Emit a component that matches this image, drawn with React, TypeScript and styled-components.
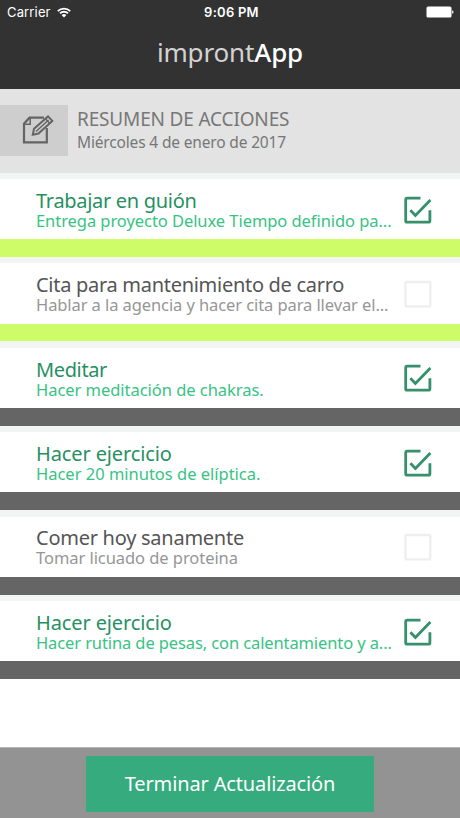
import React from "react";
import styled, { createGlobalStyle } from "styled-components";

const GlobalStyle = createGlobalStyle`
  * { box-sizing: border-box; }
  body { margin: 0; background: #fff; font-family: "Noto Sans", sans-serif; }
  h1, h2, h3, p, ul { margin: 0; padding: 0; font-weight: 400; }
`;

const Screen = styled.div`
  width: 460px;
  height: 818px;
  display: flex;
  flex-direction: column;
  overflow: hidden;
  background: #fff;
`;

const Header = styled.header`
  flex: none;
  height: 89px;
  background: #323232;
  color: #fff;
`;

const StatusBar = styled.div`
  display: grid;
  grid-template-columns: 1fr auto 1fr;
  align-items: center;
  height: 24px;
  padding: 0 6px 0 7px;
  font-family: Inter, sans-serif;
  font-size: 13px;
`;

const Carrier = styled.div`
  display: flex;
  align-items: center;
  gap: 6px;
  letter-spacing: 0.15px;
`;

const Clock = styled.div`
  padding-left: 2px;
  font-weight: 600;
  font-size: 13px;
  letter-spacing: 0.25px;
`;

const BatterySlot = styled.div`
  display: flex;
  justify-content: flex-end;
`;

const Brand = styled.h1`
  margin-top: 9px;
  text-align: center;
  font-size: 26px;
  line-height: 38px;
  letter-spacing: -0.15px;
  color: #d2d2d2;
`;

const BrandStrong = styled.span`
  color: #fff;
  font-weight: 500;
`;

const Summary = styled.section`
  flex: none;
  display: flex;
  height: 83.6px;
  padding-top: 16px;
  background: #e3e3e3;
`;

const SummaryIcon = styled.div`
  display: flex;
  width: 68px;
  height: 51px;
  padding: 10px 0 0 22px;
  background: #cecece;
`;

const SummaryText = styled.div`
  padding-left: 9px;
  color: #777;
  white-space: nowrap;
`;

const SummaryTitle = styled.h2`
  font-size: 19px;
  line-height: 28px;
  letter-spacing: -0.16px;
`;

const SummaryDate = styled.p`
  font-size: 15.5px;
  line-height: 19px;
  letter-spacing: -0.16px;
`;

const List = styled.ul`
  flex: 1;
  list-style: none;
`;

const Item = styled.li`
  height: 84.4px;
  padding-top: 6.4px;
  background: #f3f4f4;
`;

const ItemBody = styled.div`
  display: flex;
  justify-content: space-between;
  height: 60.2px;
  padding: 10.8px 28px 0 36px;
  background: #fff;
`;

const ItemBar = styled.div<{ $color: string }>`
  height: 17.8px;
  background: ${(p) => p.$color};
`;

const ItemTitle = styled.h3<{ $done: boolean; $spacing: number }>`
  font-size: 20px;
  line-height: 22px;
  letter-spacing: ${(p) => p.$spacing}px;
  white-space: nowrap;
  color: ${(p) => (p.$done ? "#279062" : "#555")};
`;

const ItemNote = styled.p<{ $done: boolean; $spacing: number }>`
  font-size: 16.5px;
  line-height: 18px;
  letter-spacing: ${(p) => p.$spacing}px;
  white-space: nowrap;
  color: ${(p) => (p.$done ? "#38c384" : "#969696")};
`;

const CheckSlot = styled.div`
  padding-top: 5.8px;
`;

const Footer = styled.footer`
  flex: none;
  display: flex;
  justify-content: center;
  height: 70.6px;
  padding-top: 8px;
  border-top: 1px solid #b5b5b5;
  background: #939393;
`;

const FinishButton = styled.button`
  width: 288px;
  height: 55.4px;
  padding: 0 0 1px;
  border: 0;
  background: #35ab7e;
  color: #fff;
  font-family: inherit;
  font-size: 20px;
  letter-spacing: -0.14px;
`;

const Wifi = () => (
  <svg width="14" height="11" viewBox="0 0 14 11" fill="none" stroke="#fff" strokeWidth="1.8">
    <path d="M0.8 4.1a8.8 8.8 0 0 1 12.4 0M3 6.4a5.7 5.7 0 0 1 8 0" />
    <path d="M7 10.5 4.7 8.2a3.2 3.2 0 0 1 4.6 0z" fill="#fff" stroke="none" />
  </svg>
);

const Battery = () => (
  <svg width="28" height="12" viewBox="0 0 28 12" fill="#fff">
    <rect x="0.5" y="0.5" width="25" height="11" rx="1.6" />
    <path d="M26.2 4.2q1.3.4 1.3 1.8t-1.3 1.8z" />
  </svg>
);

const NoteIcon = () => (
  <svg width="32" height="30" viewBox="0 0 32 30" fill="none" stroke="#646464" strokeWidth="2.2">
    <path d="M22 2.7H7.5L2 8.7v18.6h22.8V13" />
    <path d="M8.2 3v6.2H2" strokeWidth="1.5" />
    <path d="M10.8 19.7l1.2-6L26 1.4l4.3 4.5L16.5 18.6z" fill="#cecece" strokeWidth="2" />
    <path d="M14 16.6 26.6 5M23.4 3.8l4.5 4.7" strokeWidth="1.4" />
  </svg>
);

const Checkbox = ({ checked }: { checked: boolean }) =>
  checked ? (
    <svg width="29" height="28" viewBox="0 0 29 28" fill="none" stroke="#35906b" strokeWidth="2.8">
      <path d="M17.5 2.2H4.2Q2.7 2.2 2.7 3.7v21Q2.7 26.2 4.2 26.2h21.2q1.5 0 1.5-1.5V14.3" />
      <path d="m7.4 14.2 5 5.2L27.4 4" />
    </svg>
  ) : (
    <svg width="29" height="28" viewBox="0 0 29 28" fill="none" stroke="#efefef" strokeWidth="2.4">
      <rect x="2.5" y="2" width="24.8" height="24.4" rx="1" />
    </svg>
  );

interface Action {
  title: string;
  note: string;
  done: boolean;
  bar: string;
  titleSpacing: number;
  noteSpacing: number;
}

const LIME = "#cefc69";
const GRAY = "#656565";

const actions: Action[] = [
  { title: "Trabajar en guión", note: "Entrega proyecto Deluxe Tiempo definido pa...", done: true, bar: LIME, titleSpacing: -0.3, noteSpacing: -0.06 },
  { title: "Cita para mantenimiento de carro", note: "Hablar a la agencia y hacer cita para llevar el...", done: false, bar: LIME, titleSpacing: -0.29, noteSpacing: -0.09 },
  { title: "Meditar", note: "Hacer meditación de chakras.", done: true, bar: GRAY, titleSpacing: -0.37, noteSpacing: -0.04 },
  { title: "Hacer ejercicio", note: "Hacer 20 minutos de elíptica.", done: true, bar: GRAY, titleSpacing: -0.12, noteSpacing: -0.01 },
  { title: "Comer hoy sanamente", note: "Tomar licuado de proteina", done: false, bar: GRAY, titleSpacing: -0.26, noteSpacing: -0.06 },
  { title: "Hacer ejercicio", note: "Hacer rutina de pesas, con calentamiento y a...", done: true, bar: GRAY, titleSpacing: -0.12, noteSpacing: -0.11 },
];

export default function App() {
  return (
    <Screen>
      <GlobalStyle />
      <Header>
        <StatusBar>
          <Carrier>
            Carrier <Wifi />
          </Carrier>
          <Clock>9:06 PM</Clock>
          <BatterySlot>
            <Battery />
          </BatterySlot>
        </StatusBar>
        <Brand>
          impront<BrandStrong>App</BrandStrong>
        </Brand>
      </Header>
      <Summary>
        <SummaryIcon>
          <NoteIcon />
        </SummaryIcon>
        <SummaryText>
          <SummaryTitle>RESUMEN DE ACCIONES</SummaryTitle>
          <SummaryDate>Miércoles 4 de enero de 2017</SummaryDate>
        </SummaryText>
      </Summary>
      <List>
        {actions.map((a, i) => (
          <Item key={i}>
            <ItemBody>
              <div>
                <ItemTitle $done={a.done} $spacing={a.titleSpacing}>{a.title}</ItemTitle>
                <ItemNote $done={a.done} $spacing={a.noteSpacing}>{a.note}</ItemNote>
              </div>
              <CheckSlot>
                <Checkbox checked={a.done} />
              </CheckSlot>
            </ItemBody>
            <ItemBar $color={a.bar} />
          </Item>
        ))}
      </List>
      <Footer>
        <FinishButton>Terminar Actualización</FinishButton>
      </Footer>
    </Screen>
  );
}
